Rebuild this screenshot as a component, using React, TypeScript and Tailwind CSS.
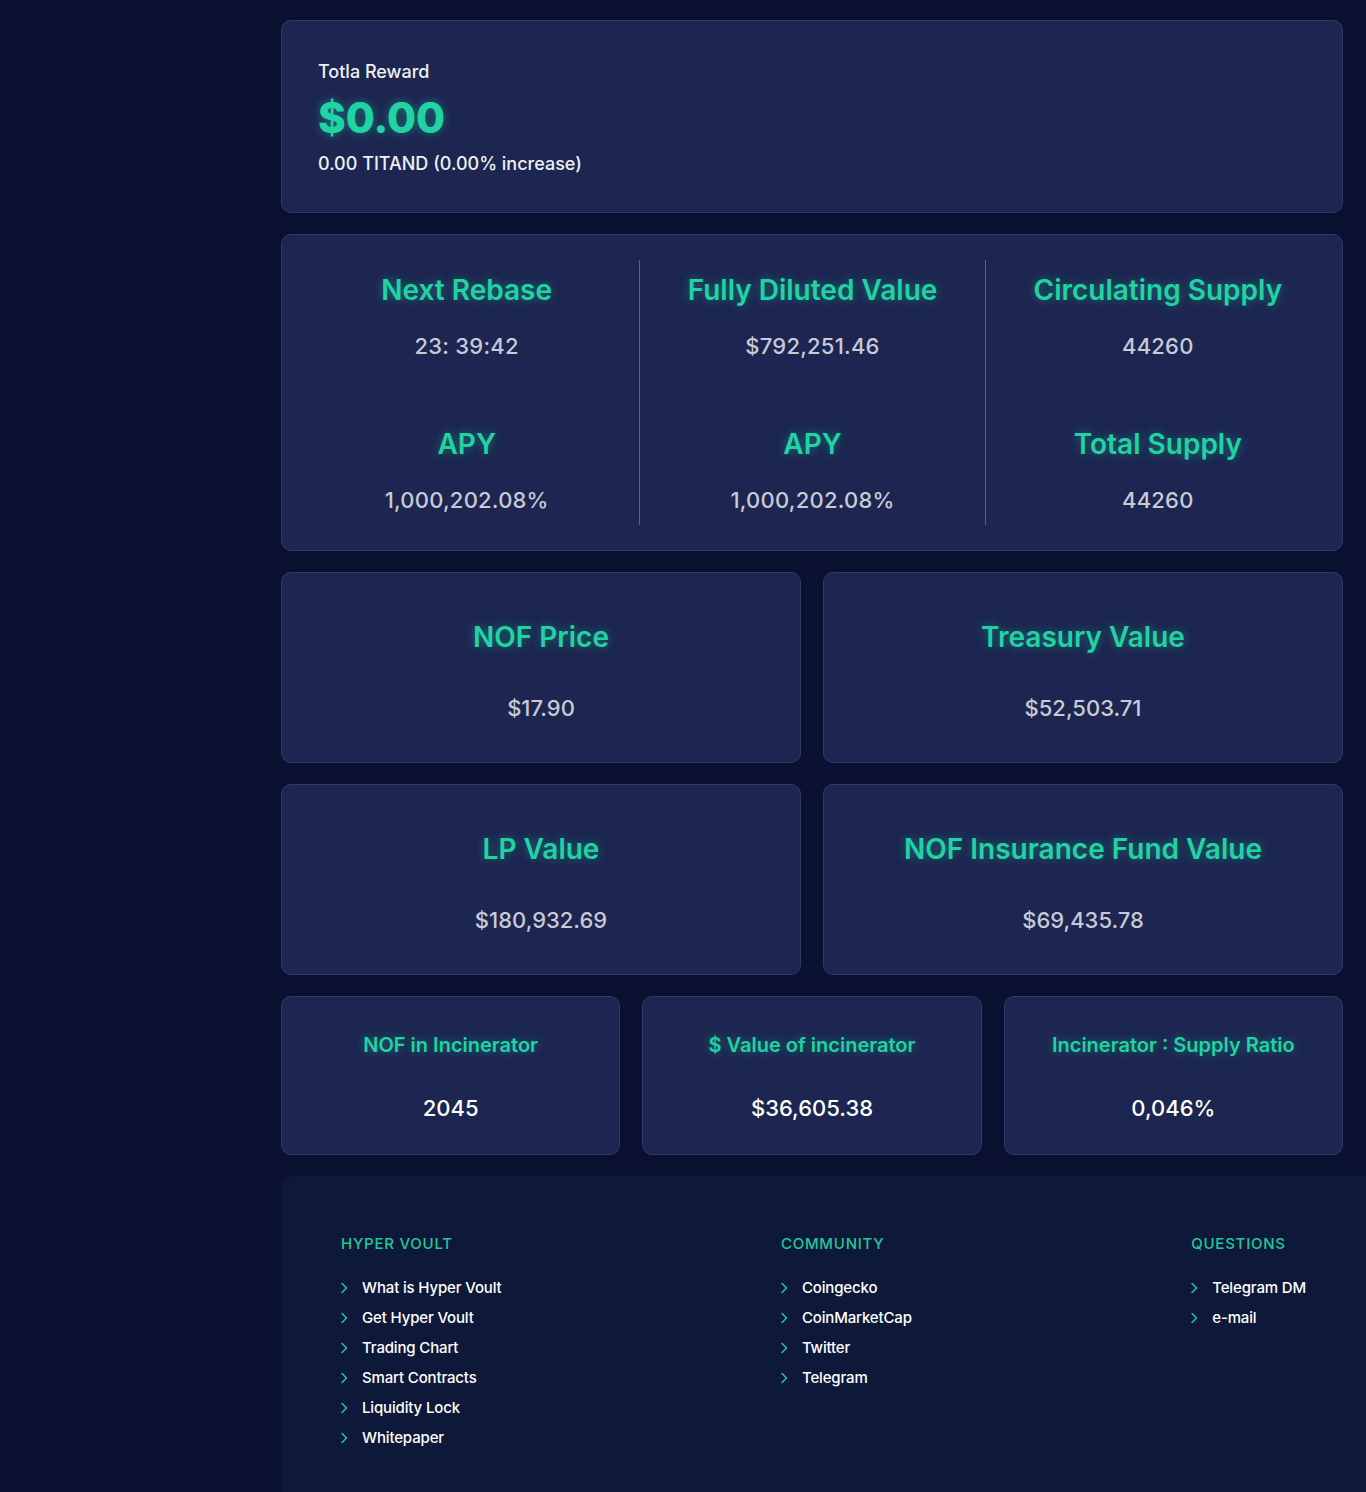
import React from 'react';

const font = { fontFamily: 'Inter, "Noto Sans", sans-serif' };

const glow = 'text-[#20d3a3] [text-shadow:0_0_10px_rgba(32,211,163,0.45)]';

const card = 'rounded-[10px] border border-[#2e3a68] bg-[#1c2650]';

function Stat({ label, value }: { label: string; value: string }) {
  return (
    <div className="flex flex-col items-center">
      <h3 className={`text-[28px] font-semibold leading-[40px] ${glow}`}>{label}</h3>
      <p className="mt-[21px] text-[22px] font-medium leading-[30px] tracking-[0.01em] text-[#c8cad6]">{value}</p>
    </div>
  );
}

function BigCard({ label, value }: { label: string; value: string }) {
  return (
    <div className={`${card} flex h-[191px] flex-col items-center pt-[44px]`}>
      <h3 className={`text-[28px] font-semibold leading-[40px] ${glow}`}>{label}</h3>
      <p className="mt-[36px] text-[22px] font-medium leading-[30px] text-[#c8cad6]">{value}</p>
    </div>
  );
}

function SmallCard({ label, value }: { label: string; value: string }) {
  return (
    <div className={`${card} flex h-[159px] flex-col items-center pt-[34px]`}>
      <h4 className={`text-[20px] font-semibold leading-[28px] ${glow}`}>{label}</h4>
      <p className="mt-[34px] text-[22px] font-medium leading-[30px] text-white">{value}</p>
    </div>
  );
}

function Chevron() {
  return (
    <svg width="7" height="12" viewBox="0 0 7 12" fill="none" className="shrink-0">
      <path d="M1 1.5 L5.5 6 L1 10.5" stroke="#20c99b" strokeWidth="1.5" strokeLinecap="round" strokeLinejoin="round" />
    </svg>
  );
}

function FooterCol({ title, links }: { title: string; links: string[] }) {
  return (
    <div>
      <h5 className="text-[15px] font-medium uppercase leading-[20px] tracking-[0.05em] text-[#20c99b]">{title}</h5>
      <ul className="mt-[24px] flex flex-col gap-[10px]">
        {links.map((l) => (
          <li key={l} className="flex items-center gap-[14px] text-[15px] font-medium leading-[20px] tracking-[-0.01em] text-white">
            <Chevron />
            {l}
          </li>
        ))}
      </ul>
    </div>
  );
}

export default function App() {
  return (
    <div style={font} className="min-h-[1492px] bg-[#0a1130] pl-[281px] pt-[20px]">
      <div className="flex flex-col gap-[21px] pr-[23px]">
        <div className={`${card} h-[193px] px-[36px] pt-[38px]`}>
          <p className="text-[18px] font-medium leading-[26px] text-[#eef0f6]">Totla Reward</p>
          <p className={`mt-[11px] text-[42px] font-extrabold leading-[44px] ${glow}`}>$0.00</p>
          <p className="mt-[11px] text-[18px] font-medium leading-[26px] text-[#eef0f6]">0.00 TITAND (0.00% increase)</p>
        </div>

        <div className={`${card} grid h-[317px] grid-cols-3 px-[12px] py-[25px]`}>
          <div className="flex flex-col justify-between py-[10px]">
            <Stat label="Next Rebase" value="23: 39:42" />
            <Stat label="APY" value="1,000,202.08%" />
          </div>
          <div className="flex flex-col justify-between border-l border-[#5a6385] py-[10px]">
            <Stat label="Fully Diluted Value" value="$792,251.46" />
            <Stat label="APY" value="1,000,202.08%" />
          </div>
          <div className="flex flex-col justify-between border-l border-[#5a6385] py-[10px]">
            <Stat label="Circulating Supply" value="44260" />
            <Stat label="Total Supply" value="44260" />
          </div>
        </div>

        <div className="grid grid-cols-2 gap-[22px]">
          <BigCard label="NOF Price" value="$17.90" />
          <BigCard label="Treasury Value" value="$52,503.71" />
        </div>

        <div className="grid grid-cols-2 gap-[22px]">
          <BigCard label="LP Value" value="$180,932.69" />
          <BigCard label="NOF Insurance Fund Value" value="$69,435.78" />
        </div>

        <div className="grid grid-cols-3 gap-[22px]">
          <SmallCard label="NOF in Incinerator" value="2045" />
          <SmallCard label="$ Value of incinerator" value="$36,605.38" />
          <SmallCard label="Incinerator : Supply Ratio" value="0,046%" />
        </div>
      </div>

      <footer className="mt-[21px] flex h-[316px] justify-between rounded-tl-[12px] bg-[#0e1839] px-[60px] pt-[58px]">
        <FooterCol
          title="Hyper Voult"
          links={['What is Hyper Voult', 'Get Hyper Voult', 'Trading Chart', 'Smart Contracts', 'Liquidity Lock', 'Whitepaper']}
        />
        <FooterCol title="Community" links={['Coingecko', 'CoinMarketCap', 'Twitter', 'Telegram']} />
        <FooterCol title="Questions" links={['Telegram DM', 'e-mail']} />
      </footer>
    </div>
  );
}
